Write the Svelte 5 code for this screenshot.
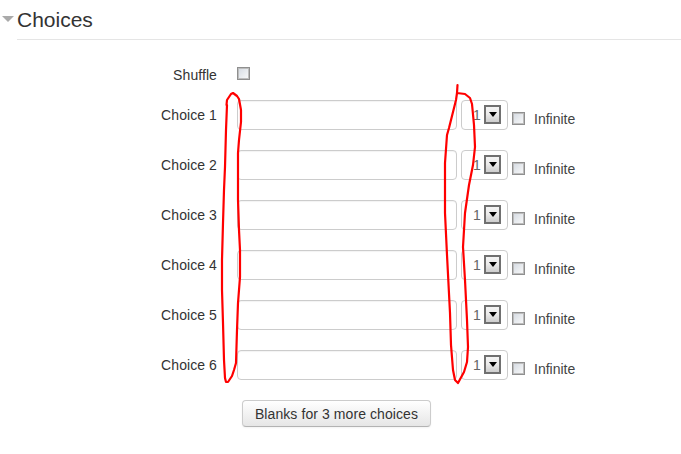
<script>
  const choices = [1, 2, 3, 4, 5, 6];
</script>

<div class="page">
  <header class="head">
    <span class="tri"></span>
    <h2>Choices</h2>
  </header>

  <div class="shuffle">
    <span class="label">Shuffle</span>
    <span class="check"></span>
  </div>

  <div class="rows">
    {#each choices as n}
      <div class="row">
        <span class="label">Choice {n}</span>
        <input class="text" type="text" />
        <div class="sel">
          <span class="val">1</span>
          <span class="arrow"><i></i></span>
        </div>
        <span class="check inf"></span>
        <span class="inflabel">Infinite</span>
      </div>
    {/each}
  </div>

  <div class="btnrow">
    <button type="button">Blanks for 3 more choices</button>
  </div>

  <svg class="ink" width="681" height="454" viewBox="0 0 681 454" aria-hidden="true">
    <path d="M226.500 105 L227 100 L231 94 L233 93 L237 96 L239 99 L241 110 L241 122 L239 140 L238 153 L238 200 L239 230 L240 250 L240 277 L238 303 L237 330 L236 363 L234 370 L232 376 L228 382 L226 382 L225 378 L224 360 L223 323 L222 290 L222 260 L223 223 L224 190 L225 167 L226 130 L227 105" />
    <path d="M457.500 85 L457 93 L465 94 L470 98 L472 104 L474 125 L475 147 L473 165 L469 185 L465 213 L463 247 L465 280 L467 320 L468 347 L467 362 L464 372 L458 383 L455 380 L453 370 L451 345 L450 313 L447 255 L445 213 L445 163 L447 135 L449 128 L453 112 L456 100 L457 93" />
  </svg>
</div>

<style>
  :global(body) {
    margin: 0;
    background: #fff;
  }
  .page {
    position: relative;
    width: 681px;
    height: 454px;
    overflow: hidden;
    font-family: "Liberation Sans", Arial, sans-serif;
    font-size: 14px;
    letter-spacing: 0.08px;
    color: #333;
  }
  .head {
    display: flex;
    align-items: flex-end;
    height: 39px;
    margin-left: 17px;
    border-bottom: 1px solid #e5e5e5;
    position: relative;
  }
  .tri {
    position: absolute;
    left: -15px;
    top: 16px;
    width: 0;
    height: 0;
    border-left: 6px solid transparent;
    border-right: 6px solid transparent;
    border-top: 6px solid #aaa;
  }
  h2 {
    margin: 0;
    font-size: 21px;
    line-height: 40px;
    font-weight: 400;
    letter-spacing: 0;
    color: #333;
    height: 39px;
  }
  .label {
    width: 217px;
    text-align: right;
    flex: none;
    line-height: 20px;
  }
  .shuffle {
    display: flex;
    align-items: center;
    gap: 20px;
    height: 20px;
    margin-top: 25px;
  }
  .shuffle .check {
    margin-top: -3px;
  }
  .rows {
    display: flex;
    flex-direction: column;
    gap: 20px;
    margin-top: 15px;
  }
  .row {
    display: flex;
    align-items: center;
    height: 30px;
  }
  .row .label {
    margin-right: 20px;
  }
  .text {
    box-sizing: border-box;
    width: 220px;
    height: 30px;
    margin: 0;
    padding: 0 6px;
    border: 1px solid #ccc;
    border-radius: 4px;
    background: #fff;
    box-shadow: inset 0 1px 1px rgba(0, 0, 0, 0.05);
    outline: none;
  }
  .sel {
    box-sizing: border-box;
    width: 47px;
    height: 30px;
    margin-left: 4px;
    border: 1px solid #ccc;
    border-radius: 4px;
    display: flex;
    align-items: center;
    padding-left: 11px;
    gap: 5px;
    color: #666;
  }
  .val {
    width: 6px;
    flex: none;
  }
  .arrow {
    box-sizing: border-box;
    width: 17px;
    height: 19px;
    margin-top: -1px;
    border: 2px solid #707070;
    background: linear-gradient(#f4f4f4, #ececec 45%, #cdcdcd);
    display: flex;
    align-items: center;
    justify-content: center;
  }
  .arrow i {
    width: 0;
    height: 0;
    border-left: 4px solid transparent;
    border-right: 4px solid transparent;
    border-top: 5px solid #000;
  }
  .check {
    box-sizing: border-box;
    display: block;
    flex: none;
    width: 13px;
    height: 13px;
    border: 1px solid #8f8f8f;
    background: linear-gradient(135deg, #d4dae2, #fafafa);
    box-shadow: inset 0 0 0 1px #bdbdbd;
  }
  .inf {
    margin-left: 4px;
    margin-top: 6px;
  }
  .inflabel {
    margin-left: 9px;
    margin-top: 8px;
    line-height: 20px;
    letter-spacing: 0;
    color: #444;
  }
  .btnrow {
    margin-top: 20px;
    padding-left: 242px;
  }
  button {
    box-sizing: border-box;
    display: block;
    width: 189px;
    height: 27px;
    margin: 0;
    padding: 0;
    border: 1px solid #ccc;
    border-bottom-color: #b3b3b3;
    border-radius: 4px;
    background: linear-gradient(#fff, #e6e6e6);
    box-shadow: 0 1px 2px rgba(0, 0, 0, 0.05);
    font: inherit;
    letter-spacing: inherit;
    color: #333;
  }
  .ink {
    position: absolute;
    left: 0;
    top: 0;
    pointer-events: none;
  }
  .ink path {
    fill: none;
    stroke: #f00;
    stroke-width: 2.200;
    stroke-linejoin: round;
    stroke-linecap: round;
  }
</style>
